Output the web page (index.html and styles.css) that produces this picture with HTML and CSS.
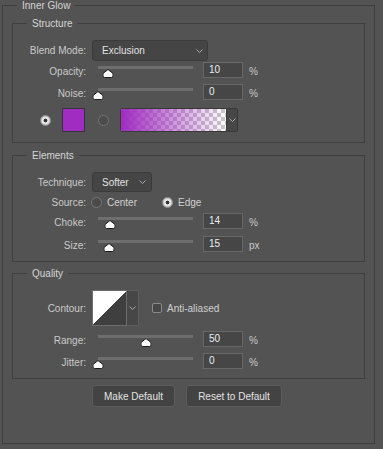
FILE: index.html
```html
<!DOCTYPE html>
<html lang="en">
<head>
  <meta charset="UTF-8">
  <title>Inner Glow</title>
  <link rel="stylesheet" href="styles.css">
</head>
<body>

<fieldset class="group outer">
  <legend>Inner Glow</legend>

  <fieldset class="group structure">
    <legend>Structure</legend>

    <div class="row row-select">
      <span class="lbl">Blend Mode:</span>
      <div class="select blend">
        <span>Exclusion</span>
        <svg class="chev" width="7" height="4" viewBox="0 0 7 4"><polyline points="0.5,0.5 3.5,3.5 6.5,0.5"/></svg>
      </div>
    </div>

    <div class="row row-slider first">
      <span class="lbl">Opacity:</span>
      <div class="slider">
        <span class="thumb" style="left:10%"><svg width="11" height="9" viewBox="0 0 11 9"><path d="M5.5 0.5 L10.5 4.5 V7 a1.5 1.5 0 0 1 -1.5 1.5 H2 a1.5 1.5 0 0 1 -1.5 -1.5 V4.5 Z"/></svg></span>
      </div>
      <div class="num">10</div>
      <span class="unit">%</span>
    </div>

    <div class="row row-slider">
      <span class="lbl">Noise:</span>
      <div class="slider">
        <span class="thumb" style="left:0%"><svg width="11" height="9" viewBox="0 0 11 9"><path d="M5.5 0.5 L10.5 4.5 V7 a1.5 1.5 0 0 1 -1.5 1.5 H2 a1.5 1.5 0 0 1 -1.5 -1.5 V4.5 Z"/></svg></span>
      </div>
      <div class="num">0</div>
      <span class="unit">%</span>
    </div>

    <div class="row row-color">
      <span class="radio on"></span>
      <span class="swatch"></span>
      <span class="radio off"></span>
      <div class="gradient">
        <span class="grad"></span>
        <span class="grad-btn">
          <svg class="chev" width="7" height="4" viewBox="0 0 7 4"><polyline points="0.5,0.5 3.5,3.5 6.5,0.5"/></svg>
        </span>
      </div>
    </div>
  </fieldset>

  <fieldset class="group elements">
    <legend>Elements</legend>

    <div class="row row-select">
      <span class="lbl">Technique:</span>
      <div class="select technique">
        <span>Softer</span>
        <svg class="chev" width="7" height="4" viewBox="0 0 7 4"><polyline points="0.5,0.5 3.5,3.5 6.5,0.5"/></svg>
      </div>
    </div>

    <div class="row row-source">
      <span class="lbl">Source:</span>
      <span class="radio off first-radio"></span>
      <span class="opt">Center</span>
      <span class="radio on second-radio"></span>
      <span class="opt">Edge</span>
    </div>

    <div class="row row-slider choke">
      <span class="lbl">Choke:</span>
      <div class="slider">
        <span class="thumb" style="left:13%"><svg width="11" height="9" viewBox="0 0 11 9"><path d="M5.5 0.5 L10.5 4.5 V7 a1.5 1.5 0 0 1 -1.5 1.5 H2 a1.5 1.5 0 0 1 -1.5 -1.5 V4.5 Z"/></svg></span>
      </div>
      <div class="num">14</div>
      <span class="unit">%</span>
    </div>

    <div class="row row-slider size">
      <span class="lbl">Size:</span>
      <div class="slider">
        <span class="thumb" style="left:12%"><svg width="11" height="9" viewBox="0 0 11 9"><path d="M5.5 0.5 L10.5 4.5 V7 a1.5 1.5 0 0 1 -1.5 1.5 H2 a1.5 1.5 0 0 1 -1.5 -1.5 V4.5 Z"/></svg></span>
      </div>
      <div class="num">15</div>
      <span class="unit">px</span>
    </div>
  </fieldset>

  <fieldset class="group quality">
    <legend>Quality</legend>

    <div class="row row-contour">
      <span class="lbl">Contour:</span>
      <div class="contour">
        <span class="curve"></span>
        <span class="curve-btn">
          <svg class="chev" width="7" height="4" viewBox="0 0 7 4"><polyline points="0.5,0.5 3.5,3.5 6.5,0.5"/></svg>
        </span>
      </div>
      <span class="check"></span>
      <span class="opt">Anti-aliased</span>
    </div>

    <div class="row row-slider range">
      <span class="lbl">Range:</span>
      <div class="slider">
        <span class="thumb" style="left:50%"><svg width="11" height="9" viewBox="0 0 11 9"><path d="M5.5 0.5 L10.5 4.5 V7 a1.5 1.5 0 0 1 -1.5 1.5 H2 a1.5 1.5 0 0 1 -1.5 -1.5 V4.5 Z"/></svg></span>
      </div>
      <div class="num">50</div>
      <span class="unit">%</span>
    </div>

    <div class="row row-slider jitter">
      <span class="lbl">Jitter:</span>
      <div class="slider">
        <span class="thumb" style="left:0%"><svg width="11" height="9" viewBox="0 0 11 9"><path d="M5.5 0.5 L10.5 4.5 V7 a1.5 1.5 0 0 1 -1.5 1.5 H2 a1.5 1.5 0 0 1 -1.5 -1.5 V4.5 Z"/></svg></span>
      </div>
      <div class="num">0</div>
      <span class="unit">%</span>
    </div>
  </fieldset>

  <div class="actions">
    <button class="btn make">Make Default</button>
    <button class="btn reset">Reset to Default</button>
  </div>
</fieldset>

</body>
</html>
```

FILE: styles.css
```css
* { box-sizing: border-box; }
body {
  margin: 0;
  background: #535353;
  color: #cacaca;
  font-family: 'Liberation Sans', Arial, sans-serif;
  font-size: 10px;
}

/* group boxes */
.group {
  border: 1px solid #3f3f3f;
  margin: 0;
  padding: 0;
  min-width: 0;
}
.group legend {
  margin-left: 14px;
  padding: 0 5px;
  height: 11px;
  line-height: 11px;
  color: #d4d4d4;
}
.outer {
  margin: 0 8px 0 2px;
  padding: 7px 0 36px;
}
.structure,
.elements,
.quality {
  margin: 0 9px;
  padding: 11px 0 9px;
}
.structure { padding-bottom: 10px; }
.elements { margin-top: 7px; }
.quality { margin-top: 6px; }

/* rows */
.row {
  display: flex;
  align-items: center;
}
.lbl {
  flex: none;
  width: 73px;
  text-align: right;
  line-height: 13px;
}

/* dropdowns */
.select {
  display: flex;
  align-items: center;
  justify-content: space-between;
  margin-left: 6px;
  padding: 0 4px 0 9px;
  background: #454545;
  border: 1px solid #3b3b3b;
  border-radius: 3px;
  color: #e2e2e2;
}
.blend { width: 116px; height: 21px; }
.technique { width: 60px; height: 20px; padding-right: 5px; }
.chev { display: block; }
.chev polyline {
  fill: none;
  stroke: #a8a8a8;
  stroke-width: 1;
}

/* sliders */
.row-slider {
  height: 16px;
  align-items: flex-end;
}
.row-slider.first { margin-top: 1px; }
.row-slider + .row-slider { margin-top: 6px; }
.choke { margin-top: 5px; }
.elements .size { margin-top: 7px; }
.range { margin-top: 5px; }
.slider {
  position: relative;
  width: 95px;
  height: 16px;
  margin-left: 12px;
  flex: none;
}
.slider::before {
  content: "";
  position: absolute;
  left: 0;
  right: 0;
  top: 4px;
  height: 3px;
  background: #6e6e6e;
}
.thumb {
  position: absolute;
  top: 7px;
  transform: translateX(-50%);
  line-height: 0;
}
.thumb path {
  fill: #fafafa;
  stroke: #1c1c1c;
  stroke-width: 1;
}
.num {
  flex: none;
  width: 40px;
  height: 16px;
  margin-left: 10px;
  padding-left: 5px;
  background: #464646;
  border: 1px solid #686868;
  color: #e8eef4;
  line-height: 14px;
}
.unit {
  margin-left: 6px;
  line-height: 13px;
}

/* radios */
.radio {
  flex: none;
  width: 11px;
  height: 11px;
  border-radius: 50%;
}
.radio.on {
  background: radial-gradient(circle, #333 0 1.6px, #e6e6e6 2.2px 3.4px, #c2c2c2 4px);
  border: 1px solid #9a9a9a;
}
.radio.off {
  background: #4b4b4b;
  border: 1px solid #767676;
}

/* colour row */
.row-color {
  height: 24px;
  margin-top: 8px;
  padding-left: 27px;
}
.swatch {
  width: 23px;
  height: 24px;
  margin-left: 11px;
  background: #a02cc1;
  border: 1px solid #353535;
}
.row-color .radio.off { margin-left: 13px; }
.gradient {
  display: flex;
  width: 118px;
  height: 24px;
  margin-left: 11px;
  border: 1px solid #383838;
  border-radius: 2px;
  overflow: hidden;
}
.grad {
  flex: 1;
  background:
    linear-gradient(to right, #a02cc1, rgba(160, 44, 193, 0)),
    repeating-conic-gradient(#c9c9c9 0 25%, #ffffff 0 50%) 0 0 / 8px 8px;
}
.grad-btn {
  display: flex;
  align-items: center;
  justify-content: center;
  width: 11px;
  background: #474747;
  border-left: 1px solid #3a3a3a;
}

/* source row */
.row-source {
  height: 11px;
  margin-top: 5px;
}
.first-radio { margin-left: 5px; }
.second-radio { margin-left: 25px; }
.opt {
  margin-left: 5px;
  line-height: 13px;
  color: #d0d0d0;
}

/* contour row */
.row-contour { height: 36px; }
.contour {
  display: flex;
  margin-left: 6px;
  height: 36px;
}
.curve {
  width: 35px;
  border: 1px solid #6c6c6c;
  background: linear-gradient(to top left, #3f3f3f 50%, #ffffff 50%);
}
.curve-btn {
  display: flex;
  align-items: center;
  justify-content: center;
  width: 12px;
  background: #474747;
  border: 1px solid #5e5e5e;
  border-left: none;
  border-radius: 0 2px 2px 0;
}
.check {
  width: 10px;
  height: 10px;
  margin-left: 13px;
  background: #474747;
  border: 1px solid #8a8a8a;
  border-radius: 2px;
}

/* buttons */
.actions {
  display: flex;
  gap: 11px;
  margin-top: 6px;
  padding-left: 89px;
}
.btn {
  height: 22px;
  padding: 0;
  background: #434343;
  border: 1px solid #5c5c5c;
  border-radius: 3px;
  color: #e2e2e2;
  font-family: 'Liberation Sans', Arial, sans-serif;
  font-size: 10px;
}
.make { width: 83px; }
.reset { width: 96px; }
```
